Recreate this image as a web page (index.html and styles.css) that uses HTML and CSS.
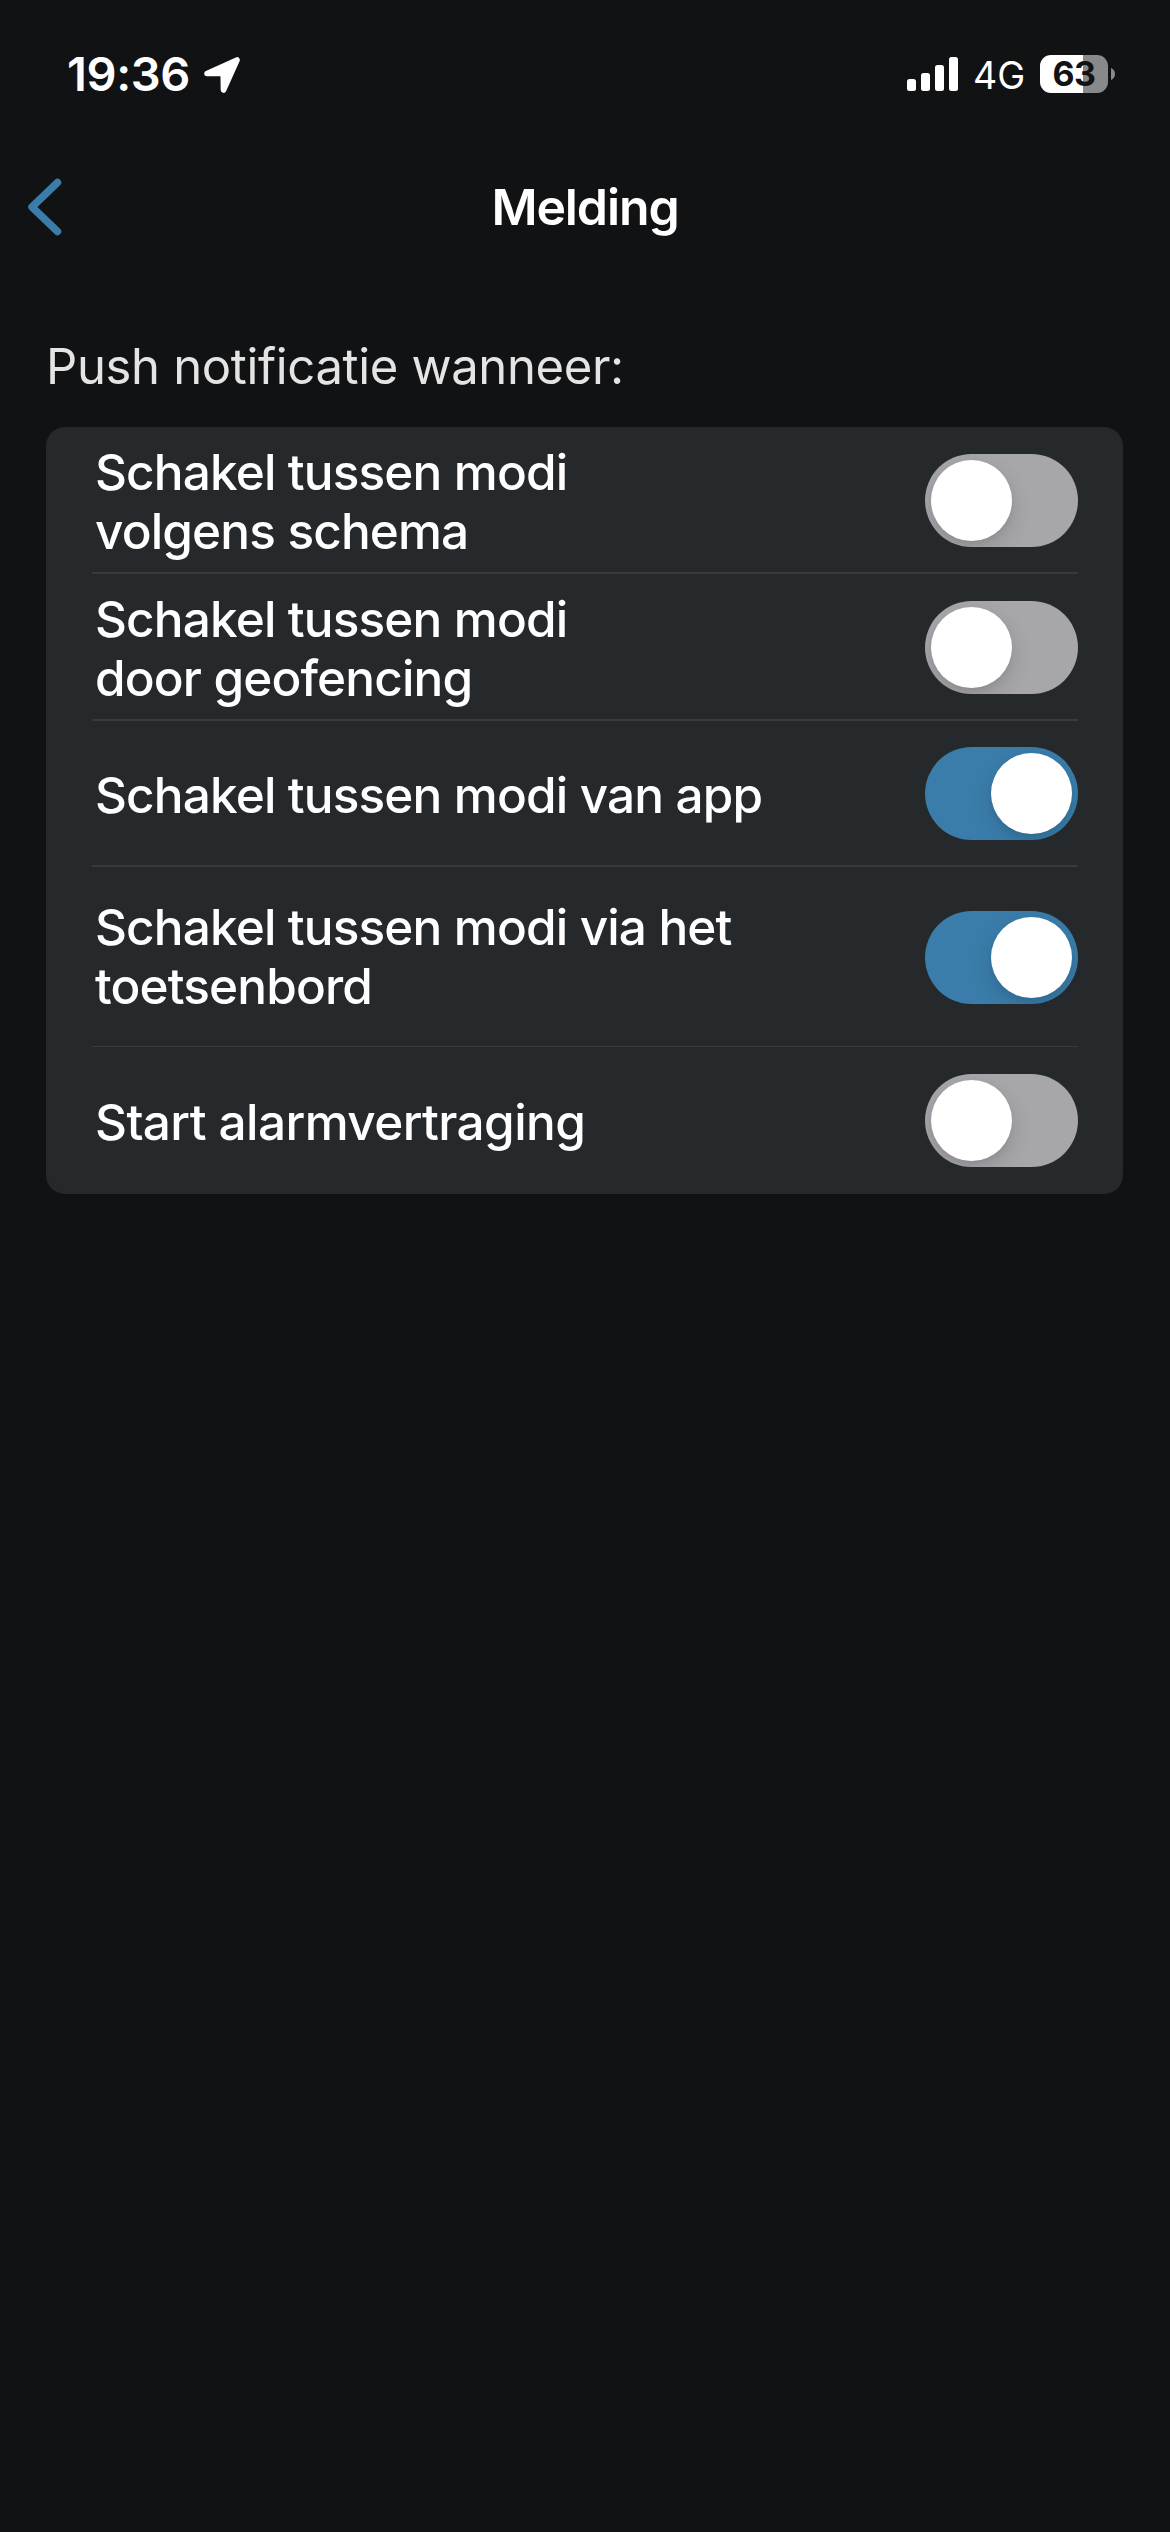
FILE: index.html
```html
<!DOCTYPE html>
<html lang="nl">
<head>
<meta charset="utf-8">
<title>Melding</title>
<link rel="stylesheet" href="styles.css">
</head>
<body>
<div class="status-bar">
  <div class="status-left">
    <span class="time">19:36</span>
    <svg class="location" width="36" height="36" viewBox="0 0 36 36"><path d="M3 16.5 33 3 19.500 33 19.200 16.500Z" fill="#fff" stroke="#fff" stroke-width="5.600" stroke-linejoin="round"/></svg>
  </div>
  <div class="status-right">
    <svg class="signal" width="51" height="34" viewBox="0 0 51 34" fill="#fff"><rect y="22" width="9" height="12" rx="2.500"/><rect x="14" y="16" width="9" height="18" rx="2.500"/><rect x="28" y="8" width="9" height="26" rx="2.500"/><rect x="42" width="9" height="34" rx="2.500"/></svg>
    <span class="network">4G</span>
    <div class="battery"><span class="battery-level">63</span></div>
    <svg class="battery-tip" width="4" height="12" viewBox="0 0 4 12"><path d="M0 0C2.500 1 4 3.300 4 6s-1.500 5-4 6Z" fill="#88898b"/></svg>
  </div>
</div>
<header class="nav">
  <svg class="back" width="34" height="58" viewBox="0 0 34 58"><path d="M29.500 4.500 4 29 29.500 53.500" fill="none" stroke="#3a7dab" stroke-width="7.500" stroke-linecap="round" stroke-linejoin="round"/></svg>
  <h1 class="title">Melding</h1>
</header>
<main class="content">
  <h2 class="section-title">Push notificatie wanneer:</h2>
  <div class="card">
    <div class="row">
      <span class="label">Schakel tussen modi<br>volgens schema</span>
      <span class="toggle"><span class="knob"></span></span>
    </div>
    <div class="row">
      <span class="label">Schakel tussen modi<br>door geofencing</span>
      <span class="toggle"><span class="knob"></span></span>
    </div>
    <div class="row row-app">
      <span class="label">Schakel tussen modi van app</span>
      <span class="toggle on"><span class="knob"></span></span>
    </div>
    <div class="row row-keypad">
      <span class="label">Schakel tussen modi via het<br>toetsenbord</span>
      <span class="toggle on"><span class="knob"></span></span>
    </div>
    <div class="row row-last">
      <span class="label">Start alarmvertraging</span>
      <span class="toggle"><span class="knob"></span></span>
    </div>
  </div>
</main>
</body>
</html>
```
FILE: styles.css
```css
* { box-sizing: border-box; }

body {
  margin: 0;
  min-height: 2532px;
  background: #111214;
  color: #fff;
  font-family: Inter, "Liberation Sans", sans-serif;
}

svg { display: block; flex: none; }

.status-bar {
  display: flex;
  justify-content: space-between;
  height: 150px;
  padding: 55px 55px 0 67px;
}

.status-left, .status-right { display: flex; align-items: flex-start; }

.time {
  width: 137px;
  font-size: 47px;
  font-weight: 600;
  line-height: 38px;
  letter-spacing: -0.4px;
}

.location { margin-top: 2px; }
.signal { margin: 2px 15px 0 0; }

.network {
  width: 67px;
  font-size: 37.5px;
  font-weight: 400;
  line-height: 42px;
}

.battery {
  display: flex;
  justify-content: center;
  width: 68px;
  height: 38px;
  border-radius: 11px;
  background: linear-gradient(to right, #fff 43px, #88898b 43px);
  color: #111214;
}

.battery-level {
  font-size: 34px;
  font-weight: 700;
  line-height: 38px;
  letter-spacing: -0.5px;
}

.battery-tip { margin: 13px 0 0 3px; }

.nav {
  display: grid;
  grid-template-columns: 1fr auto 1fr;
  align-items: center;
  height: 114px;
  padding: 0 28px;
}

.title {
  margin: 0;
  font-size: 50px;
  font-weight: 560;
  line-height: 60px;
  letter-spacing: -1.1px;
}

.content { padding: 73px 47px 0 46px; }

.section-title {
  margin: 0 0 30px;
  font-size: 49px;
  font-weight: 420;
  line-height: 60px;
  letter-spacing: -0.35px;
  color: #e4e4e4;
  white-space: nowrap;
}

.card {
  padding: 0 45px 0 46px;
  border-radius: 19px;
  background: #25292b;
}

.row {
  display: flex;
  align-items: center;
  justify-content: space-between;
  height: 147px;
  padding-top: 2px;
  border-bottom: 2px solid #373b3e;
}

.row-app { height: 146px; padding-top: 1px; }
.row-keypad { height: 180px; padding-top: 1px; border-bottom-width: 1px; }
.row-last { padding-top: 0; border-bottom: 0; }

.label {
  padding: 2px 0 0 3px;
  font-size: 49.5px;
  font-weight: 500;
  line-height: 59px;
  letter-spacing: -0.86px;
  white-space: nowrap;
}

.row-app .label { padding-top: 4px; }
.row-keypad .label { padding-top: 0; }
.row-last .label { padding-top: 3px; letter-spacing: -0.6px; }

.toggle {
  display: flex;
  flex: none;
  width: 153px;
  height: 93px;
  padding: 6px;
  border-radius: 47px;
  background: #a7a6aa;
  overflow: hidden;
}

.toggle.on {
  justify-content: flex-end;
  background: #3a7dab;
}

.knob {
  width: 81px;
  height: 81px;
  border-radius: 50%;
  background: #fff;
  box-shadow: 0 8px 22px rgba(0, 0, 0, 0.14), 0 3px 5px rgba(0, 0, 0, 0.05);
}
```
